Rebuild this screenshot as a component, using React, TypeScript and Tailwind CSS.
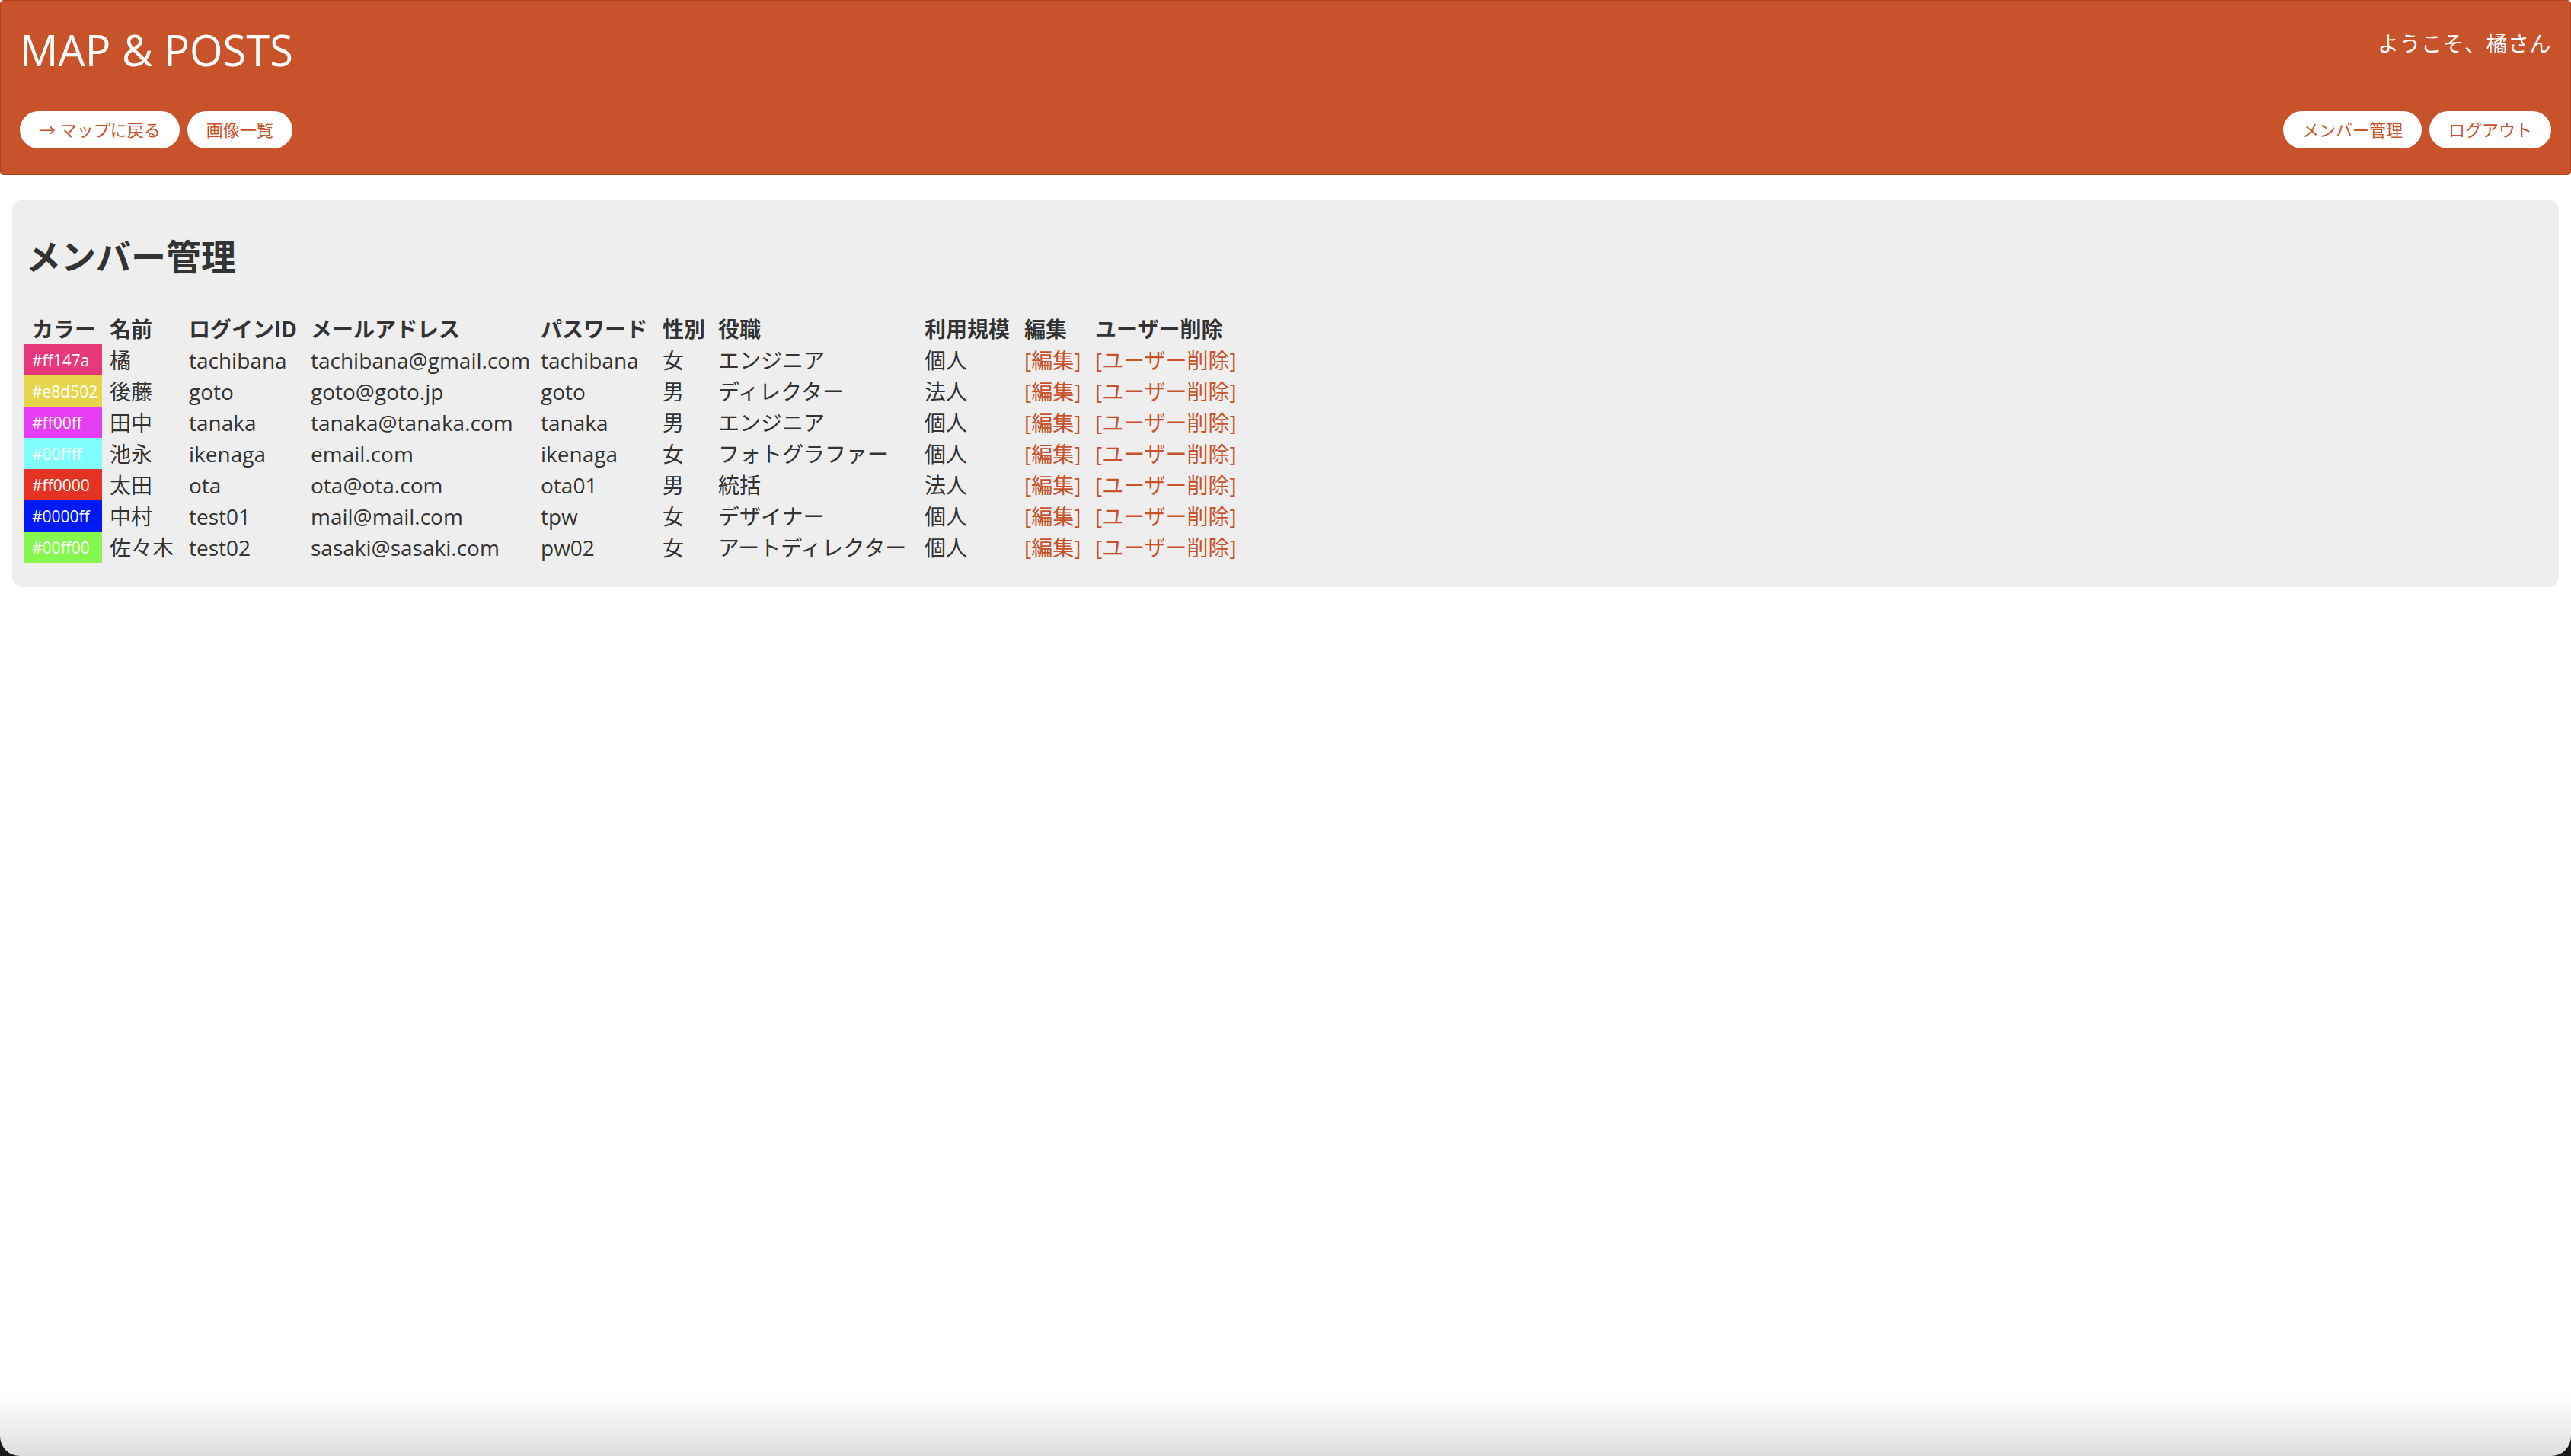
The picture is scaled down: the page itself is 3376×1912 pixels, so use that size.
import React from 'react';

type Member = {
  color: string;
  swatch: string;
  name: string;
  loginId: string;
  email: string;
  password: string;
  gender: string;
  role: string;
  scale: string;
};

const members: Member[] = [
  { color: '#ff147a', swatch: 'bg-[#e7387a]', name: '橘', loginId: 'tachibana', email: 'tachibana@gmail.com', password: 'tachibana', gender: '女', role: 'エンジニア', scale: '個人' },
  { color: '#e8d502', swatch: 'bg-[#e8d44a]', name: '後藤', loginId: 'goto', email: 'goto@goto.jp', password: 'goto', gender: '男', role: 'ディレクター', scale: '法人' },
  { color: '#ff00ff', swatch: 'bg-[#e63cf2]', name: '田中', loginId: 'tanaka', email: 'tanaka@tanaka.com', password: 'tanaka', gender: '男', role: 'エンジニア', scale: '個人' },
  { color: '#00ffff', swatch: 'bg-[#7ffcfc]', name: '池永', loginId: 'ikenaga', email: 'email.com', password: 'ikenaga', gender: '女', role: 'フォトグラファー', scale: '個人' },
  { color: '#ff0000', swatch: 'bg-[#e53323]', name: '太田', loginId: 'ota', email: 'ota@ota.com', password: 'ota01', gender: '男', role: '統括', scale: '法人' },
  { color: '#0000ff', swatch: 'bg-[#0019f5]', name: '中村', loginId: 'test01', email: 'mail@mail.com', password: 'tpw', gender: '女', role: 'デザイナー', scale: '個人' },
  { color: '#00ff00', swatch: 'bg-[#84f84f]', name: '佐々木', loginId: 'test02', email: 'sasaki@sasaki.com', password: 'pw02', gender: '女', role: 'アートディレクター', scale: '個人' },
];

const cell = 'h-[41px] pl-[10px] whitespace-nowrap text-left align-middle leading-[36px]';

function PillButton({ children }: { children: React.ReactNode }) {
  return (
    <a
      href="#"
      className="flex h-[49px] items-center rounded-full bg-white px-[25px] text-[22px] text-[#c8522a]"
    >
      {children}
    </a>
  );
}

export default function App() {
  return (
    <div className="flex min-h-screen flex-col bg-white font-['Open_Sans','Noto_Sans_CJK_JP',sans-serif] text-[#333333]">
      {/* Header */}
      <header className="flex h-[230px] flex-col justify-between rounded-[5px] border border-[#b0441f] bg-[#c8522a] px-[25px] pt-[36px] pb-[34px]">
        <div className="flex items-start justify-between">
          <h1 className="text-[56px] leading-none font-normal text-white">MAP &amp; POSTS</h1>
          <p className="mt-[6px] text-[28px] leading-none tracking-[0.5px] text-white">ようこそ、橘さん</p>
        </div>
        <div className="flex items-center justify-between">
          <div className="flex gap-[10px]">
            <PillButton>→ マップに戻る</PillButton>
            <PillButton>画像一覧</PillButton>
          </div>
          <div className="flex gap-[10px]">
            <PillButton>メンバー管理</PillButton>
            <PillButton>ログアウト</PillButton>
          </div>
        </div>
      </header>

      {/* Member list */}
      <section className="mx-[16px] mt-[32px] rounded-[14px] bg-[#eeeeee] px-[16px] pt-[50px] pb-[32px]">
        <h2 className="ml-[2px] text-[46px] leading-[48px] font-bold">メンバー管理</h2>
        <table className="mt-[51px] table-fixed border-collapse text-[28px]">
          <colgroup>
            <col className="w-[102px]" />
            <col className="w-[104px]" />
            <col className="w-[160px]" />
            <col className="w-[302px]" />
            <col className="w-[160px]" />
            <col className="w-[73px]" />
            <col className="w-[271px]" />
            <col className="w-[131px]" />
            <col className="w-[93px]" />
            <col className="w-[220px]" />
          </colgroup>
          <thead>
            <tr className="font-bold">
              <th className={cell}>カラー</th>
              <th className={cell}>名前</th>
              <th className={cell}>ログインID</th>
              <th className={cell}>メールアドレス</th>
              <th className={cell}>パスワード</th>
              <th className={cell}>性別</th>
              <th className={cell}>役職</th>
              <th className={cell}>利用規模</th>
              <th className={cell}>編集</th>
              <th className={cell}>ユーザー削除</th>
            </tr>
          </thead>
          <tbody>
            {members.map((m) => (
              <tr key={m.loginId}>
                <td className={`${cell} ${m.swatch} text-[21px] font-medium text-white`}>{m.color}</td>
                <td className={cell}>{m.name}</td>
                <td className={cell}>{m.loginId}</td>
                <td className={cell}>{m.email}</td>
                <td className={cell}>{m.password}</td>
                <td className={cell}>{m.gender}</td>
                <td className={cell}>{m.role}</td>
                <td className={cell}>{m.scale}</td>
                <td className={cell}>
                  <a href="#" className="text-[#c8522a]">[編集]</a>
                </td>
                <td className={cell}>
                  <a href="#" className="text-[#c8522a]">[ユーザー削除]</a>
                </td>
              </tr>
            ))}
          </tbody>
        </table>
      </section>

      <div className="flex-1" />

      {/* bottom window edge */}
      <div className="bg-[#1a1a1a]">
        <div className="h-[80px] rounded-b-[26px] bg-gradient-to-b from-white to-[#dedede]" />
      </div>
    </div>
  );
}
